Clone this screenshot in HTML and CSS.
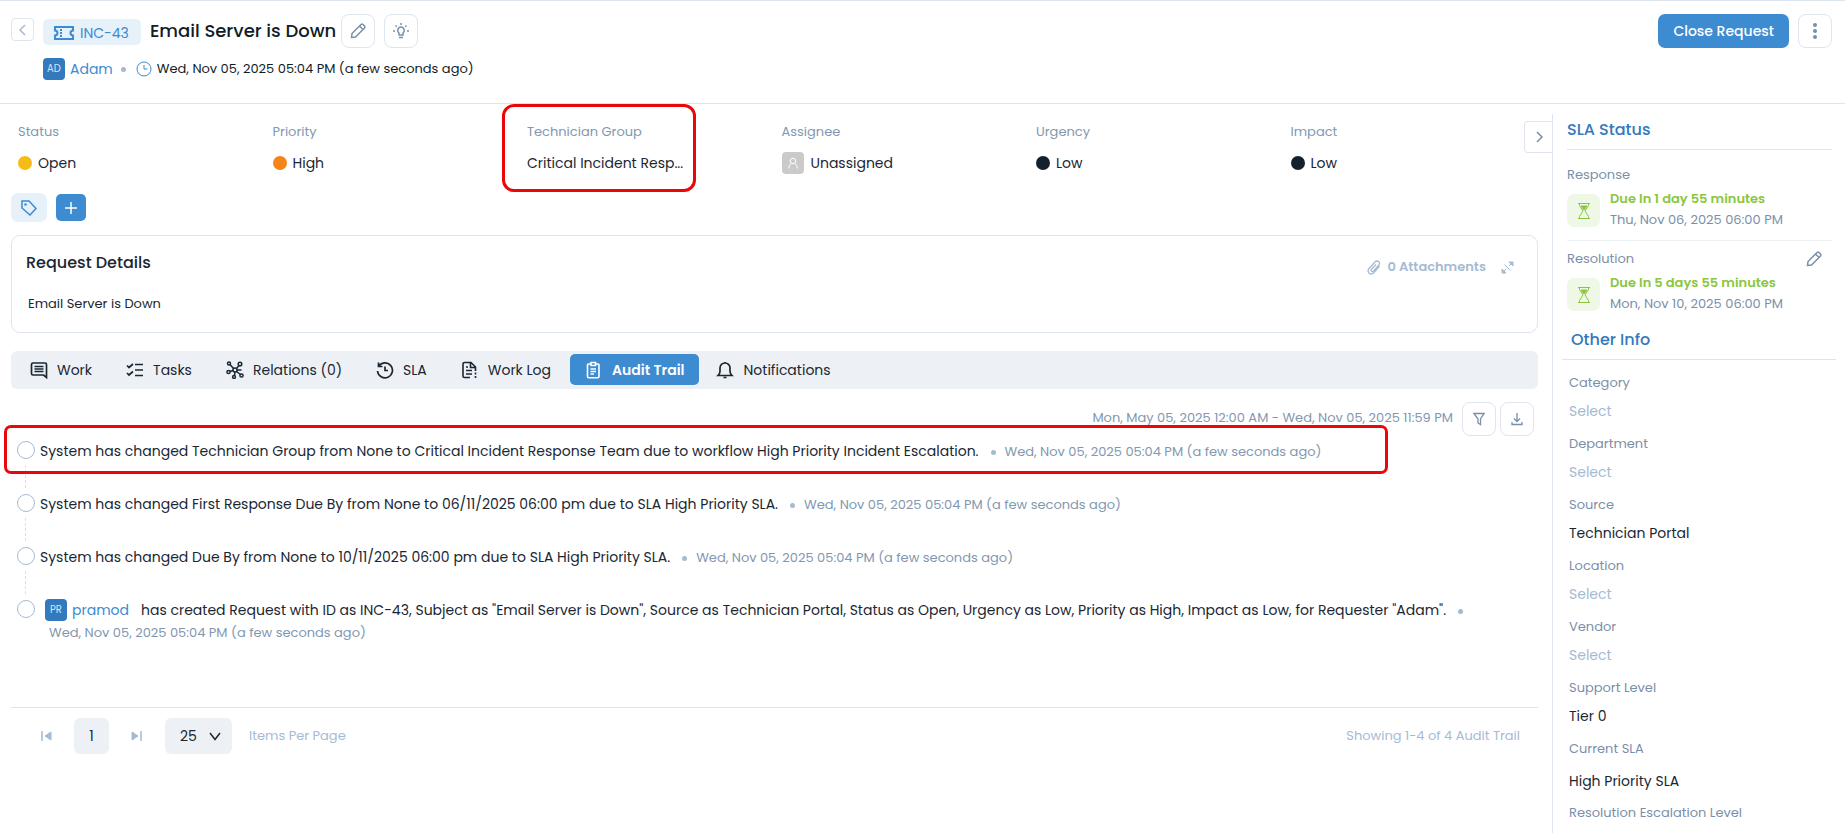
FILE: index.html
```html
<!DOCTYPE html>
<html lang="en">
	<head>
		<meta charset="UTF-8">
		<title>INC-43 Email Server is Down</title>
		<link rel="stylesheet" href="styles.css">
	</head>
	<body>
		<header class="header">
			<button class="back" aria-label="Back"><svg width="12" height="12" viewBox="0 0 12 12" stroke-width="1.500"><path d="M8 1L3 6l5 5"/></svg></button>
			<div class="header-main">
				<div class="title-row">
					<span class="ticket-id">
						<svg width="20" height="14" viewBox="0 0 20 14" stroke-width="2"><path d="M1 1h18v3.500a2.500 2.500 0 0 0 0 5V13H1V9.500a2.500 2.500 0 0 0 0-5z"/><path d="M7 3v2M7 6v2M7 9v2"/></svg>
						INC-43
					</span>
					<h1>Email Server is Down</h1>
					<button class="icon-btn" aria-label="Edit"><svg width="16" height="16" viewBox="0 0 16 16" stroke-width="1.500"><path d="M1.500 14.500l.5-4L11 1.500q1-.8 2 0l1.500 1.500q.8 1 0 2L5.500 14z M9.500 3l3.500 3.500"/></svg></button>
					<button class="icon-btn bulb" aria-label="Suggestions"><svg width="16" height="16" viewBox="0 0 16 16" stroke-width="1.500"><path d="M6 12v-2a3.300 3.300 0 1 1 4 0v2zM6 14.500h4M8 0v2M2.500 2.500l1.200 1.200M13.500 2.500l-1.200 1.200M0 8h2M14 8h2"/></svg></button>
				</div>
				<div class="meta-row">
					<span class="avatar">AD</span>
					<a href="#">Adam</a>
					<span class="dot"></span>
					<svg class="clock" width="16" height="16" viewBox="0 0 16 16"><circle cx="8" cy="8" r="7"/><path d="M8 4v4h3.500"/></svg>
					<span>Wed, Nov 05, 2025 05:04 PM (a few seconds ago)</span>
				</div>
			</div>
			<div class="header-actions">
				<button class="close-btn">Close Request</button>
				<button class="icon-btn" aria-label="More"><svg class="solid" width="4" height="16" viewBox="0 0 4 16"><circle cx="2" cy="2" r="2"/><circle cx="2" cy="8" r="2"/><circle cx="2" cy="14" r="2"/></svg></button>
			</div>
		</header>

		<div class="layout">
			<main class="main">
				<dl class="fields">
					<div><dt>Status</dt><dd><i class="bullet open"></i>Open</dd></div>
					<div><dt>Priority</dt><dd><i class="bullet high"></i>High</dd></div>
					<div class="marked"><dt>Technician Group</dt><dd>Critical Incident Resp...</dd></div>
					<div><dt>Assignee</dt><dd><span class="avatar none"><svg width="12" height="12" viewBox="0 0 12 12"><circle cx="6" cy="4" r="2.800"/><path d="M1.500 11.500q.5-4 3-5M10.500 11.500q-.5-4-3-5"/></svg></span>Unassigned</dd></div>
					<div><dt>Urgency</dt><dd><i class="bullet low"></i>Low</dd></div>
					<div><dt>Impact</dt><dd><i class="bullet low"></i>Low</dd></div>
				</dl>
				<button class="collapse" aria-label="Collapse panel"><svg width="8" height="12" viewBox="0 0 8 12" stroke-width="1.500"><path d="M2 1l5 5-5 5"/></svg></button>

				<div class="tags">
					<button class="tag-btn" aria-label="Tags"><svg width="16" height="16" viewBox="0 0 16 16" stroke-width="1.500"><path d="M1 1h7l7 7.500L9 15 1 8z"/><circle cx="4.500" cy="4.500" r=".6"/></svg></button>
					<button class="add-btn" aria-label="Add tag"><svg width="12" height="12" viewBox="0 0 12 12" stroke-width="1.500"><path d="M6 0v12M0 6h12"/></svg></button>
				</div>

				<section class="details">
					<div class="details-head">
						<h2>Request Details</h2>
						<div class="attachments">
							<svg width="14" height="15" viewBox="0 0 14 15" stroke-width="1.300"><path d="M12.500 6L7 12.500q-2.500 2.500-4.800.7Q0 11 2 8.500L8 2q2-1.800 3.800-.3 1.600 1.600 0 3.400L6.500 11q-1 1-2 .2-.9-1 0-2L9 4.500"/></svg>
							<span>0 Attachments</span>
							<svg class="expand" width="13" height="13" viewBox="0 0 13 13"><path d="M8 1h4v4zM1 8v4h4z" fill="currentColor"/><path d="M12 1L8 5M1 12l4-4M3.500 3.500l6 6"/></svg>
						</div>
					</div>
					<p>Email Server is Down</p>
				</section>

				<nav class="tabs">
					<button><svg width="18" height="18" viewBox="0 0 18 18" stroke-width="1.700"><path d="M3 2h12q1.500 0 1.500 1.500V16.500L13.500 14H3q-1.500 0-1.500-1.500v-9Q1.500 2 3 2zM4.500 5.500h9M4.500 8h9M4.500 10.500h9"/></svg>Work</button>
					<button><svg width="18" height="18" viewBox="0 0 18 18" stroke-width="1.700"><path d="M1 4.500l2 2L7 3M1 12l2 2 4-3.500M9 3.500h8M9 9h8M9 14.500h8"/></svg>Tasks</button>
					<button><svg width="18" height="18" viewBox="0 0 18 18" stroke-width="1.500"><circle cx="3" cy="2.500" r="1.500"/><circle cx="14" cy="3" r="1.800"/><circle cx="2.500" cy="11" r="1.600"/><circle cx="9" cy="9" r="2"/><circle cx="15.500" cy="14.500" r="1.600"/><circle cx="8" cy="16" r="1.400"/><path d="M4 3.500l3.500 4M13 4.500l-2.500 3M4 10.500l3-1M10.500 10.500l4 3M9 11l-.5 3.500M11 9h4.500"/></svg>Relations (0)</button>
					<button><svg width="18" height="18" viewBox="0 0 18 18" stroke-width="1.700"><path d="M2.500 5.500A7.500 7.500 0 1 1 1.500 10M2.500 1.500v4h4M9 5.500V9.500h3"/></svg>SLA</button>
					<button><svg width="18" height="18" viewBox="0 0 18 18" stroke-width="1.600"><path d="M9 16.500H3.500Q2 16.500 2 15V3q0-1.500 1.500-1.500H10l4.500 4.500v4M9.500 1.500v5h5M5 6h2M5 9.500h6M5 13h6M14.500 11.500v2M14.500 15v2"/></svg>Work Log</button>
					<button class="active"><svg width="18" height="18" viewBox="0 0 18 18" stroke-width="1.600"><path d="M6 3H3.500Q2.500 3 2.500 4v11.500q0 1.200 1.200 1.200h9q1.300 0 1.300-1.200V4q0-1-1-1h-2.500M6 1.500h4.500v3H6zM5.500 8H11M5.500 10.500H11M5.500 13H9"/></svg>Audit Trail</button>
					<button><svg width="18" height="18" viewBox="0 0 18 18" stroke-width="1.700"><path d="M2 14.500h14q-2-2-2-4V7A5 5 0 0 0 4 7v3.500q0 2-2 4zM7.500 16.500h3M9 2V1"/></svg>Notifications</button>
				</nav>

				<div class="range">
					<span>Mon, May 05, 2025 12:00 AM - Wed, Nov 05, 2025 11:59 PM</span>
					<button class="icon-btn" aria-label="Filter"><svg width="12" height="14" viewBox="0 0 12 14" stroke-width="1.300"><path d="M1 1.500h10L7.500 7v5.500L5 11V7z"/></svg></button>
					<button class="icon-btn" aria-label="Download"><svg width="12" height="14" viewBox="0 0 12 14" stroke-width="1.300"><path d="M6 1v8M3 6.500L6 9.500l3-3M1 10v2.500h10V10"/></svg></button>
				</div>

				<ol class="trail">
					<li class="marked">System has changed Technician Group from None to Critical Incident Response Team due to workflow High Priority Incident Escalation.<span class="dot"></span><time>Wed, Nov 05, 2025 05:04 PM (a few seconds ago)</time></li>
					<li>System has changed First Response Due By from None to 06/11/2025 06:00 pm due to SLA High Priority SLA.<span class="dot"></span><time>Wed, Nov 05, 2025 05:04 PM (a few seconds ago)</time></li>
					<li>System has changed Due By from None to 10/11/2025 06:00 pm due to SLA High Priority SLA.<span class="dot"></span><time>Wed, Nov 05, 2025 05:04 PM (a few seconds ago)</time></li>
					<li><span class="avatar">PR</span><a href="#">pramod</a>has created Request with ID as INC-43, Subject as "Email Server is Down", Source as Technician Portal, Status as Open, Urgency as Low, Priority as High, Impact as Low, for Requester "Adam".<span class="dot"></span><time>Wed, Nov 05, 2025 05:04 PM (a few seconds ago)</time></li>
				</ol>

				<footer class="pager">
					<button class="step" aria-label="First page"><svg width="11" height="10" viewBox="0 0 11 10"><path d="M1 0v10" stroke-width="1.500"/><path d="M10 1v8L4 5z" fill="currentColor"/></svg></button>
					<button class="page">1</button>
					<button class="step" aria-label="Last page"><svg width="11" height="10" viewBox="0 0 11 10"><path d="M10 0v10" stroke-width="1.500"/><path d="M1 1v8l6-4z" fill="currentColor"/></svg></button>
					<div class="size">
						<select id="size"><option>25</option><option>50</option></select>
						<svg width="12" height="9" viewBox="0 0 12 9" stroke-width="1.500"><path d="M1 1l5 6.500L11 1"/></svg>
					</div>
					<label for="size">Items Per Page</label>
					<span class="total">Showing 1-4 of 4 Audit Trail</span>
				</footer>
			</main>

			<aside class="side">
				<section class="sla">
					<h3>SLA Status</h3>
					<div class="sla-item">
						<div class="sla-label">Response</div>
						<div class="due">
							<span class="glass"><svg width="12" height="16" viewBox="0 0 12 16"><path d="M0 .5h12M0 15.500h12M1.500.5v2L5 8l-3.500 5.500v2M10.500.5v2L7 8l3.500 5.500v2"/><path d="M3 3h6L6 7z" fill="currentColor"/></svg></span>
							<div><strong>Due In 1 day 55 minutes</strong><span>Thu, Nov 06, 2025 06:00 PM</span></div>
						</div>
					</div>
					<div class="sla-item">
						<div class="sla-label">Resolution <button aria-label="Edit resolution"><svg width="16" height="16" viewBox="0 0 16 16" stroke-width="1.500"><path d="M1.500 14.500l.5-4L11 1.500q1-.8 2 0l1.500 1.500q.8 1 0 2L5.500 14z M9.500 3l3.500 3.500"/></svg></button></div>
						<div class="due">
							<span class="glass"><svg width="12" height="16" viewBox="0 0 12 16"><path d="M0 .5h12M0 15.500h12M1.500.5v2L5 8l-3.500 5.500v2M10.500.5v2L7 8l3.500 5.500v2"/><path d="M3 3h6L6 7z" fill="currentColor"/></svg></span>
							<div><strong>Due In 5 days 55 minutes</strong><span>Mon, Nov 10, 2025 06:00 PM</span></div>
						</div>
					</div>
				</section>
				<section class="other">
					<h3>Other Info</h3>
					<div class="field"><label for="category">Category</label><select id="category" class="empty"><option>Select</option></select></div>
					<div class="field"><label for="department">Department</label><select id="department" class="empty"><option>Select</option></select></div>
					<div class="field"><label for="source">Source</label><select id="source"><option>Technician Portal</option></select></div>
					<div class="field"><label for="location">Location</label><select id="location" class="empty"><option>Select</option></select></div>
					<div class="field"><label for="vendor">Vendor</label><select id="vendor" class="empty"><option>Select</option></select></div>
					<div class="field"><label for="level">Support Level</label><select id="level"><option>Tier 0</option></select></div>
					<div class="field current"><span>Current SLA</span><p>High Priority SLA</p></div>
					<div class="field"><span>Resolution Escalation Level</span></div>
				</section>
			</aside>
		</div>
	</body>
</html>
```
FILE: styles.css
```css
*, *::before, *::after {
	box-sizing: border-box;
}
body {
	display: flex;
	flex-direction: column;
	height: 100vh;
	margin: 0;
	overflow: hidden;
	font-family: Poppins, Inter, sans-serif;
	font-size: 13px;
	line-height: 22px;
	color: #1a2733;
	background: #fff;
}
h1, h2, h3, p, dl, dd, ol {
	margin: 0;
	padding: 0;
}
h1, h2, h3 {
	font-weight: 500;
}
button, select {
	padding: 0;
	border: 0;
	background: none;
	font: inherit;
	color: inherit;
	appearance: none;
	cursor: pointer;
}
button {
	display: flex;
	align-items: center;
	justify-content: center;
}
a {
	color: #3d8bd1;
	text-decoration: none;
}
svg {
	flex: none;
	fill: none;
	stroke: currentColor;
}
svg.solid {
	fill: currentColor;
	stroke: none;
}

/* header */
.header {
	display: flex;
	flex: none;
	height: 104px;
	padding: 13px 13px 0 11px;
	border-top: 1px solid #dfe5ee;
	border-bottom: 1px solid #dfe5ee;
}
.back {
	width: 23px;
	height: 23px;
	margin: 4px 9px 0 0;
	border: 1px solid #dfe5ee;
	border-radius: 4px;
	color: #a5bad3;
}
.title-row, .meta-row, .header-actions {
	display: flex;
	align-items: center;
}
.title-row {
	height: 34px;
}
.ticket-id {
	display: flex;
	align-items: center;
	gap: 6px;
	height: 26px;
	margin-top: 2px;
	padding: 1px 12px 0 11px;
	border-radius: 5px;
	background: #e6f1fa;
	color: #3d8bd1;
	font-size: 14px;
}
h1 {
	margin: 0 5px 0 9px;
	font-size: 18px;
	color: #111c26;
}
.icon-btn {
	width: 34px;
	height: 34px;
	border: 1px solid #dfe5ee;
	border-radius: 8px;
	color: #7b8fa8;
}
.bulb {
	margin-left: 9px;
}
.meta-row {
	margin-top: 10px;
	color: #111c26;
}
.meta-row a {
	font-size: 14px;
}
.avatar {
	display: inline-flex;
	flex: none;
	align-items: center;
	justify-content: center;
	width: 22px;
	height: 22px;
	margin-right: 5px;
	border-radius: 4px;
	background: #3279be;
	color: #d3e4f4;
	font-size: 10px;
}
.dot {
	display: inline-block;
	width: 5px;
	height: 5px;
	margin: 0 5px 0 8px;
	border-radius: 50%;
	background: #a5bad3;
	vertical-align: middle;
}
.clock {
	margin: 0 5px;
	color: #3d8bd1;
}
.header-actions {
	height: 34px;
	margin-left: auto;
	gap: 9px;
}
.close-btn {
	height: 34px;
	padding: 0 15px;
	border-radius: 7px;
	background: #3d8bd1;
	color: #fff;
	font-size: 14px;
	font-weight: 500;
}

.layout {
	display: flex;
	flex: 1;
	min-height: 0;
}
.main {
	position: relative;
	flex: 1;
	min-width: 0;
	padding: 17px 14px 0 11px;
}

/* request fields */
.fields {
	display: grid;
	grid-template-columns: repeat(6, 1fr);
}
.fields > div {
	position: relative;
	padding-left: 7px;
}
.fields dt, .range, time {
	color: #8297b0;
}
.fields dd {
	display: flex;
	align-items: center;
	height: 22px;
	margin-top: 9px;
	font-size: 14px;
}
.bullet {
	width: 14px;
	height: 14px;
	margin-right: 6px;
	border-radius: 50%;
}
.open {
	background: #f5bc18;
}
.high {
	background: #f58518;
}
.low {
	background: #14212d;
}
.avatar.none {
	margin-right: 7px;
	background: #cacaca;
	color: #fff;
}
/* red frames round the highlighted items */
.marked::before {
	content: "";
	position: absolute;
	border: 3px solid #ea0707;
}
.fields .marked::before {
	top: -17px;
	left: -18px;
	width: 194px;
	height: 88px;
	border-radius: 12px;
}
.collapse {
	position: absolute;
	top: 17px;
	right: 0;
	width: 28px;
	height: 32px;
	border: 1px solid #dfe5ee;
	border-right: 0;
	border-radius: 4px 0 0 4px;
	background: #fff;
	color: #7b8fa8;
}

.tags {
	display: flex;
	align-items: center;
	gap: 9px;
	height: 29px;
	margin-top: 19px;
}
.tag-btn {
	width: 36px;
	height: 29px;
	border-radius: 7px;
	background: #e6f1fa;
	color: #3d8bd1;
}
.add-btn {
	width: 30px;
	height: 27px;
	border-radius: 5px;
	background: #3d8bd1;
	color: #fff;
}

/* request details */
.details {
	height: 98px;
	margin-top: 13px;
	padding: 16px 23px 0 14px;
	border: 1px solid #dfe5ee;
	border-radius: 9px;
}
.details-head {
	display: flex;
	justify-content: space-between;
}
h2, h3 {
	font-size: 16px;
}
.attachments {
	display: flex;
	align-items: center;
	gap: 7px;
	margin-top: 4px;
	color: #a5bad3;
	font-weight: 600;
}
.expand {
	margin-left: 8px;
}
.details p {
	margin: 15px 2px 0;
}

/* tabs */
.tabs {
	display: flex;
	align-items: center;
	height: 38px;
	margin-top: 18px;
	padding: 0 2px 1px;
	border-radius: 6px;
	background: #edf1f6;
}
.tabs button {
	gap: 9px;
	height: 31px;
	padding: 0 17px;
	font-size: 14px;
}
.tabs .active {
	margin-left: 2px;
	padding: 0 15px;
	border-radius: 5px;
	background: #3d8bd1;
	color: #fff;
	font-weight: 600;
}

.range {
	display: flex;
	justify-content: flex-end;
	gap: 4px;
	height: 34px;
	margin: 13px 4px 0 0;
	line-height: 32px;
}
.range span {
	margin-right: 5px;
}

/* audit trail */
.trail {
	height: 272px;
	border-bottom: 1px solid #dfe5ee;
	list-style: none;
	font-size: 14px;
}
.trail li {
	position: relative;
	min-height: 53px;
	padding: 4px 0 0 29px;
}
.trail li::after {
	content: "";
	position: absolute;
	top: 5px;
	left: 6px;
	width: 18px;
	height: 18px;
	border: 1px solid #a5bad3;
	border-radius: 50%;
	background: #fff;
}
.trail li:not(:last-child) {
	background: repeating-linear-gradient(#dcdfe3 0 3px, transparent 3px 5px) 14px 29px / 1px 25px no-repeat;
}
.trail time {
	display: inline-block;
	margin-left: 9px;
	font-size: 13px;
}
.trail .avatar {
	margin: 0 5px 0 5px;
	vertical-align: top;
}
.trail a {
	margin-right: 12px;
}
.trail .dot {
	margin: 0 0 0 12px;
}
.trail .marked::before {
	top: -11px;
	left: -7px;
	width: 1384px;
	height: 49px;
	border-radius: 7px;
}

/* pagination */
.pager {
	display: flex;
	align-items: center;
	padding: 10px 18px 0 26px;
	color: #a5bad3;
}
.step {
	width: 19px;
	height: 36px;
}
.page {
	width: 35px;
	height: 36px;
	margin: 0 18px;
	border-radius: 6px;
	background: #edf1f6;
	color: #1a2733;
	font-size: 14px;
}
.size {
	display: flex;
	align-items: center;
	width: 67px;
	height: 36px;
	margin: 0 17px 0 19px;
	border-radius: 6px;
	background: #edf1f6;
	color: #1a2733;
	font-size: 14px;
}
.size select {
	width: 67px;
	height: 36px;
	padding-left: 15px;
}
.size svg {
	margin-left: -23px;
	pointer-events: none;
}
.total {
	margin-left: auto;
}

/* right panel */
.side {
	width: 293px;
	flex: none;
	margin-top: 10px;
	padding: 0 13px 0 14px;
	border-left: 1px solid #dfe5ee;
	color: #7b8fa8;
}
h3 {
	color: #3279be;
}
.sla h3 {
	padding: 5px 0 8px;
	border-bottom: 1px solid #dfe5ee;
}
.sla-item {
	padding-top: 7px;
}
.sla-item:nth-child(2) {
	padding: 14px 0 12px;
	border-bottom: 1px solid #edf1f6;
}
.sla-label {
	display: flex;
	justify-content: space-between;
	margin-bottom: 8px;
	padding-right: 10px;
}
.due {
	display: flex;
	gap: 10px;
	height: 34px;
}
.glass {
	display: flex;
	align-items: center;
	justify-content: center;
	width: 33px;
	height: 33px;
	border-radius: 7px;
	background: #eff8e6;
	color: #8bc63f;
}
.due strong, .due div span {
	display: block;
	line-height: 21px;
}
.due div {
	margin-top: -6px;
}
.due strong {
	color: #8bc63f;
	font-weight: 600;
}
.other h3 {
	margin: 17px -4px 12px -5px;
	padding: 0 9px 8px;
	border-bottom: 1px solid #dfe5ee;
}
.field {
	height: 61px;
	padding-left: 2px;
}
.field label, .field span {
	display: block;
}
.field select, .field p {
	display: block;
	width: 100%;
	margin-top: 6px;
	font-size: 14px;
	line-height: 22px;
	color: #1a2733;
}
.field select.empty {
	color: #a5bad3;
}
.current {
	height: 64px;
}
.field.current p {
	margin-top: 10px;
}
```
